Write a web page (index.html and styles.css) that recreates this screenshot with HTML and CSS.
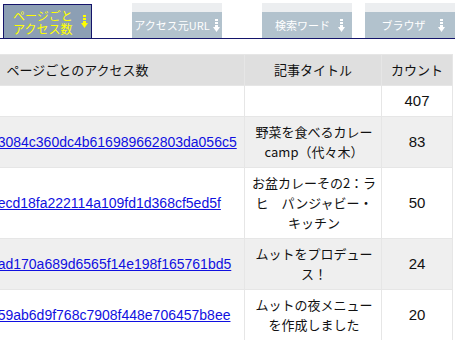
FILE: index.html
```html
<!doctype html>
<html lang="ja">
  <head>
    <meta charset="UTF-8" />
    <meta name="viewport" content="width=device-width, initial-scale=1.0" />
    <title>アクセス解析</title>
    <link rel="stylesheet" href="styles.css">
  </head>

  <body>
    <nav class="tabs">
      <a class="tab tab-active" href="#pages">
        <span class="tab-label">ページごと<br />アクセス数</span>
        <svg class="tab-arrow" width="7" height="13" viewBox="0 0 7 13">
          <rect x="2" y="0" width="3" height="2" />
          <rect x="2" y="3" width="3" height="2" />
          <rect x="2" y="6" width="3" height="2" />
          <polygon points="0,8 7,8 3.5,13" />
        </svg>
      </a>
      <a class="tab tab-url" href="#referer">
        <span class="tab-label">アクセス元URL</span>
        <svg class="tab-arrow" width="7" height="13" viewBox="0 0 7 13">
          <rect x="2" y="0" width="3" height="2" />
          <rect x="2" y="3" width="3" height="2" />
          <rect x="2" y="6" width="3" height="2" />
          <polygon points="0,8 7,8 3.5,13" />
        </svg>
      </a>
      <a class="tab tab-word" href="#words">
        <span class="tab-label">検索ワード</span>
        <svg class="tab-arrow" width="7" height="13" viewBox="0 0 7 13">
          <rect x="2" y="0" width="3" height="2" />
          <rect x="2" y="3" width="3" height="2" />
          <rect x="2" y="6" width="3" height="2" />
          <polygon points="0,8 7,8 3.5,13" />
        </svg>
      </a>
      <a class="tab tab-browser" href="#browser">
        <span class="tab-label">ブラウザ</span>
        <svg class="tab-arrow" width="7" height="13" viewBox="0 0 7 13">
          <rect x="2" y="0" width="3" height="2" />
          <rect x="2" y="3" width="3" height="2" />
          <rect x="2" y="6" width="3" height="2" />
          <polygon points="0,8 7,8 3.5,13" />
        </svg>
      </a>
    </nav>

    <div class="report">
      <table class="access-table">
        <colgroup>
          <col class="col-page" />
          <col class="col-title" />
          <col class="col-count" />
        </colgroup>
        <thead>
          <tr>
            <th>ページごとのアクセス数</th>
            <th>記事タイトル</th>
            <th>カウント</th>
          </tr>
        </thead>
        <tbody>
          <tr>
            <td></td>
            <td></td>
            <td class="count">407</td>
          </tr>
          <tr class="odd">
            <td class="page"><a href="#">/curry/entry/a3084c360dc4b616989662803da056c5</a></td>
            <td class="title">野菜を食べるカレーcamp（代々木）</td>
            <td class="count">83</td>
          </tr>
          <tr>
            <td class="page"><a href="#">/curry/entry/0ecd18fa222114a109fd1d368cf5ed5f</a></td>
            <td class="title">お盆カレーその2：ラヒ　パンジャビー・キッチン</td>
            <td class="count">50</td>
          </tr>
          <tr class="odd">
            <td class="page"><a href="#">/curry/entry/2ad170a689d6565f14e198f165761bd5</a></td>
            <td class="title">ムットをプロデュース！</td>
            <td class="count">24</td>
          </tr>
          <tr>
            <td class="page"><a href="#">/curry/entry/359ab6d9f768c7908f448e706457b8ee</a></td>
            <td class="title">ムットの夜メニューを作成しました</td>
            <td class="count">20</td>
          </tr>
        </tbody>
      </table>
    </div>
  </body>
</html>
```

FILE: styles.css
```css
:root {
  --navy: #14146a;
  --tab-active: #8c9fb4;
  --tab-idle: #b2c2cd;
  --tab-top: #eceef0;
  --cell-border: #e6e6e6;
}

* {
  box-sizing: border-box;
}

body {
  margin: 0;
  font-family: "Liberation Sans", "Noto Sans CJK JP", sans-serif;
  font-size: 13px;
  color: #111;
  background: #fff;
  overflow: hidden;
}

/* tabs */

.tabs {
  display: flex;
  align-items: flex-end;
  height: 39px;
  border-bottom: 1px solid var(--navy);
}

.tab {
  display: flex;
  align-items: center;
  justify-content: center;
  gap: 4px;
  width: 90px;
  height: 35px;
  color: #fff;
  text-decoration: none;
  font-family: "Noto Sans CJK JP", sans-serif;
  font-size: 11px;
  line-height: 12px;
  background: var(--tab-idle);
  border-top: 9px solid var(--tab-top);
  white-space: nowrap;
}

.tab-arrow {
  flex: none;
  fill: currentColor;
}

.tab-active {
  justify-content: flex-start;
  gap: 8px;
  width: 89px;
  height: 34px;
  margin-left: 3px;
  padding-left: 9px;
  color: #ffff00;
  font-size: 12px;
  line-height: 13px;
  background: var(--tab-active);
  border: 1px solid var(--navy);
  border-bottom: none;
}

.tab-url {
  margin-left: 40px;
  gap: 3px;
}

.tab-word {
  margin-left: 40px;
  padding-left: 6px;
  gap: 8px;
}

.tab-browser {
  margin-left: 13px;
  padding-left: 6px;
  gap: 12px;
}

/* table */

.report {
  margin-top: 15px;
}

.access-table {
  table-layout: fixed;
  width: 542px;
  margin-left: -90px;
  border-collapse: collapse;
  line-height: 20px;
}

.col-page {
  width: 334px;
}

.col-title {
  width: 137px;
}

.col-count {
  width: 71px;
}

.access-table th,
.access-table td {
  padding: 5px 5px;
  border: 1px solid var(--cell-border);
  text-align: center;
  font-weight: normal;
  font-family: "Noto Sans CJK JP", sans-serif;
}

.access-table thead tr {
  background: #dfdfdf;
}

.access-table tr.odd {
  background: #efefef;
}

.access-table td.page {
  text-align: left;
  white-space: nowrap;
  overflow: hidden;
}

.page a {
  font-family: "Liberation Sans", sans-serif;
  font-size: 14px;
  color: #1010e0;
}

.access-table td.count {
  font-family: "Liberation Sans", sans-serif;
  font-size: 15px;
}

.access-table td.title {
  padding: 5px 4px 5px 6px;
}
```
